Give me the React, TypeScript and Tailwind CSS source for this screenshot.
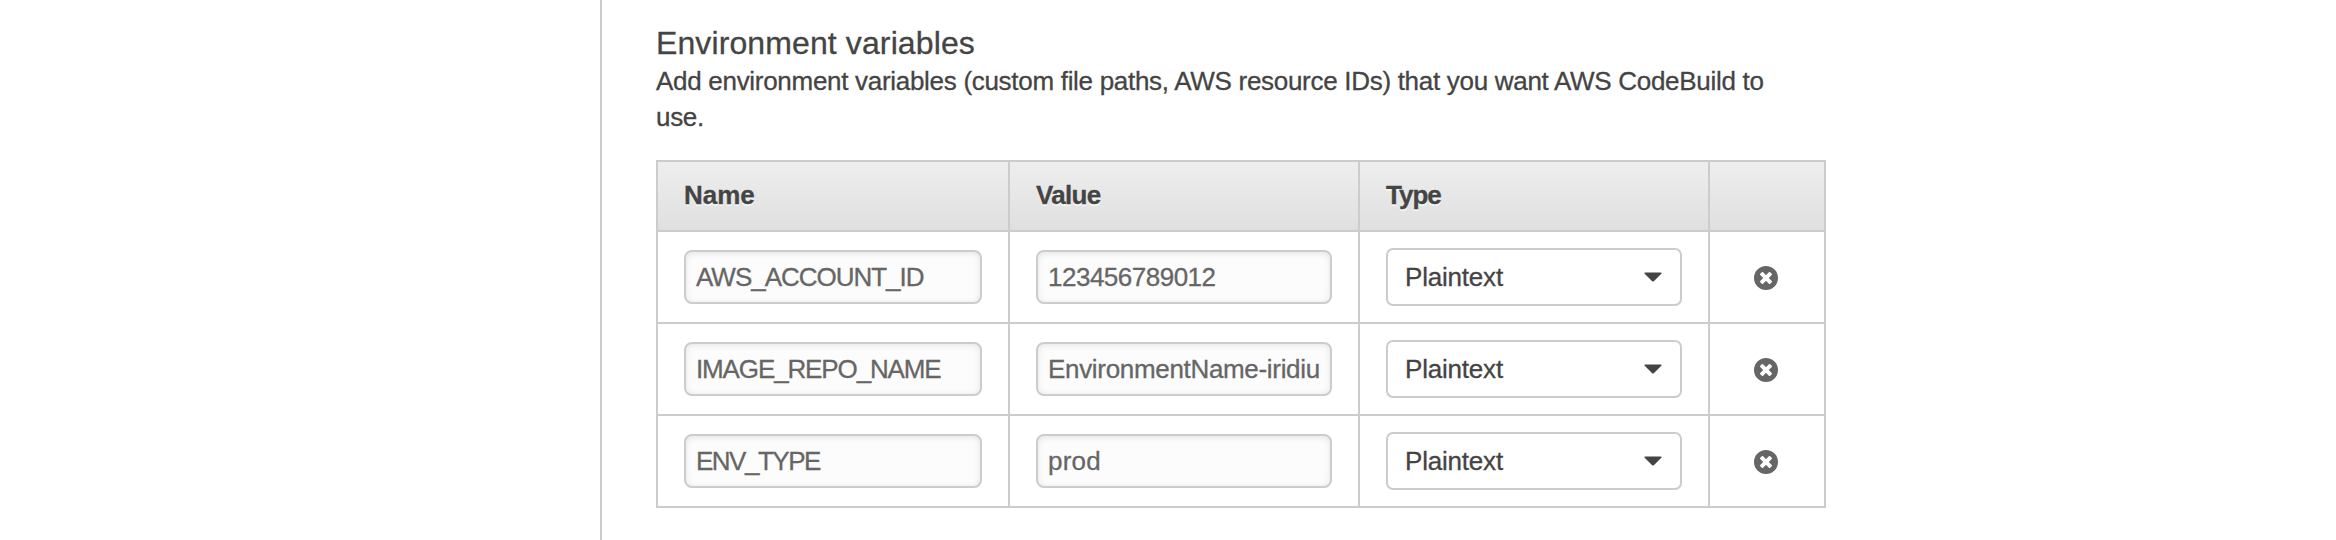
type Field = { text: string; tracking: string };
type Variable = { name: Field; value: Field };

const headers: Field[] = [
  { text: "Name", tracking: "tracking-normal" },
  { text: "Value", tracking: "tracking-[-0.7px]" },
  { text: "Type", tracking: "tracking-[-1px]" },
];

const variables: Variable[] = [
  {
    name: { text: "AWS_ACCOUNT_ID", tracking: "tracking-[-1.02px]" },
    value: { text: "123456789012", tracking: "tracking-[-0.5px]" },
  },
  {
    name: { text: "IMAGE_REPO_NAME", tracking: "tracking-[-1.13px]" },
    value: { text: "EnvironmentName-iridiu", tracking: "tracking-[-0.32px]" },
  },
  {
    name: { text: "ENV_TYPE", tracking: "tracking-[-1.5px]" },
    value: { text: "prod", tracking: "tracking-[0.2px]" },
  },
];

const row = "grid grid-cols-[350px_348px_348px_114px] gap-[2px]";

function TextField({ text, tracking }: Field) {
  return (
    <div className="flex h-[90px] items-center bg-white px-[26px]">
      <div
        className={`h-[54px] w-full overflow-hidden rounded-[8px] border-2 border-[#ccc] bg-[#fcfcfc] pl-[10px] leading-[50px] whitespace-nowrap text-[#666] shadow-[inset_0_1px_6px_rgba(0,0,0,0.1)] ${tracking}`}
      >
        {text}
      </div>
    </div>
  );
}

function TypeSelect() {
  return (
    <div className="flex h-[90px] items-center bg-white px-[26px]">
      <div className="flex h-[58px] w-full items-center justify-between rounded-[7px] border-2 border-[#ccc] bg-white pr-[18px] pl-[17px]">
        <span className="leading-[54px] tracking-[-0.2px]">Plaintext</span>
        <svg className="h-[10px] w-[18px]" viewBox="0 0 18 10">
          <path d="M1.2 0.5H16.8Q18.2 0.7 17.3 1.7L9.8 9.2Q9 9.9 8.2 9.2L0.7 1.7Q-0.2 0.7 1.2 0.5Z" fill="#444" />
        </svg>
      </div>
    </div>
  );
}

function RemoveButton() {
  return (
    <button type="button" aria-label="Remove" className="flex h-[90px] items-center justify-center bg-white pt-[2px] pr-[2px]">
      <svg className="size-6" viewBox="0 0 24 24">
        <circle cx="12" cy="12" r="12" fill="#666" />
        <g fill="#fff" transform="rotate(45 12 12)">
          <rect x="5" y="10" width="14" height="4" rx="0.9" />
          <rect x="10" y="5" width="4" height="14" rx="0.9" />
        </g>
      </svg>
    </button>
  );
}

export default function App() {
  return (
    <div className="flex h-[540px] w-full overflow-hidden bg-white pl-[600px] font-['Liberation_Sans',Arial,sans-serif] text-[26px] text-[#444] [-webkit-text-stroke:0.3px]">
      <main className="flex-1 border-l-2 border-[#ccc] pt-[25px] pl-[54px]">
        <h2 className="mb-[2px] text-[32px] leading-[36px] tracking-[0.11px]">Environment variables</h2>
        <p className="w-[1150px] leading-[36px] tracking-[-0.295px]">
          Add environment variables (custom file paths, AWS resource IDs) that you want AWS CodeBuild to
          <br />
          use.
        </p>
        <div className="mt-[25px] flex w-[1170px] flex-col gap-[2px] border-2 border-[#ccc] bg-[#ccc]">
          <div className={row}>
            {headers.map((h) => (
              <div
                key={h.text}
                className={`h-[68px] bg-linear-to-b from-[#eee] to-[#dfdfdf] pt-[15px] pl-[26px] leading-[36px] font-bold text-shadow-[0_2px_0_#f6f6f6] ${h.tracking}`}
              >
                {h.text}
              </div>
            ))}
            <div className="h-[68px] bg-linear-to-b from-[#eee] to-[#dfdfdf]" />
          </div>
          {variables.map((v) => (
            <div key={v.name.text} className={row}>
              <TextField {...v.name} />
              <TextField {...v.value} />
              <TypeSelect />
              <RemoveButton />
            </div>
          ))}
        </div>
      </main>
    </div>
  );
}
